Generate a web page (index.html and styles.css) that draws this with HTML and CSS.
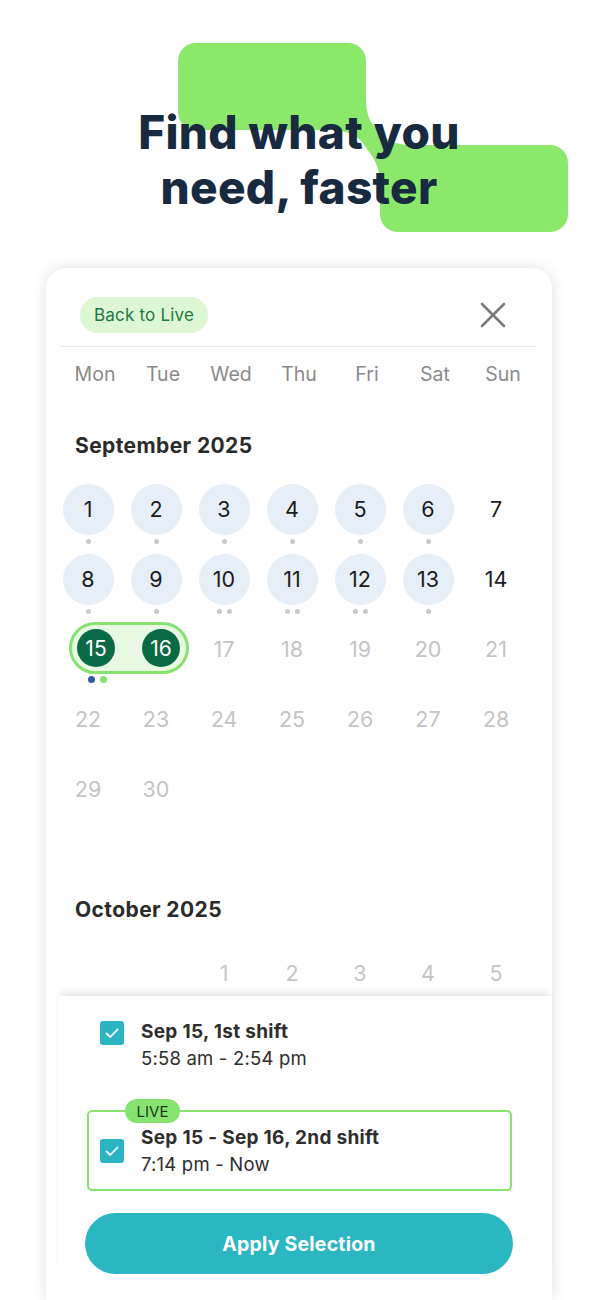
FILE: index.html
```html
<!DOCTYPE html>
<html lang="en">

<head>
    <meta charset="UTF-8">
    <meta name="viewport" content="width=device-width, initial-scale=1.0">
    <title>Find what you need, faster</title>
    <link rel="stylesheet" href="styles.css">
</head>

<body>
    <div class="hero">
        <svg class="hero-shape" width="598" height="268" viewBox="0 0 598 268">
            <rect x="178" y="43" width="188" height="87" rx="18" fill="#8ce86a"/>
            <rect x="380" y="145" width="188" height="87" rx="18" fill="#8ce86a"/>
            <path d="M330 130 Q352 130 362 142 L372 156 Q379 166 380 180 L412 145 Q393 145 386 138 L374 126 Q366 117 366 100 Z" fill="#8ce86a"/>
        </svg>
        <h1>Find what you<br>need, faster</h1>
    </div>

    <div class="card">
        <div class="card-header">
            <span class="back-live">Back to Live</span>
            <svg class="close" width="26" height="26" viewBox="0 0 26 26">
                <path d="M2 2 L24 24 M24 2 L2 24" stroke="#7b7b7b" stroke-width="2.6" stroke-linecap="round"/>
            </svg>
        </div>

        <div class="weekdays">
            <span>Mon</span><span>Tue</span><span>Wed</span><span>Thu</span><span>Fri</span><span>Sat</span><span>Sun</span>
        </div>

        <div class="calendar">
            <h2 class="month-title">September 2025</h2>
            <div class="days">
                <div class="day"><span class="num has-shift">1</span><span class="dots"><i></i></span></div>
                <div class="day"><span class="num has-shift">2</span><span class="dots"><i></i></span></div>
                <div class="day"><span class="num has-shift">3</span><span class="dots"><i></i></span></div>
                <div class="day"><span class="num has-shift">4</span><span class="dots"><i></i></span></div>
                <div class="day"><span class="num has-shift">5</span><span class="dots"><i></i></span></div>
                <div class="day"><span class="num has-shift">6</span><span class="dots"><i></i></span></div>
                <div class="day"><span class="num">7</span></div>

                <div class="day"><span class="num has-shift">8</span><span class="dots"><i></i></span></div>
                <div class="day"><span class="num has-shift">9</span><span class="dots"><i></i></span></div>
                <div class="day"><span class="num has-shift">10</span><span class="dots"><i></i><i></i></span></div>
                <div class="day"><span class="num has-shift">11</span><span class="dots"><i></i><i></i></span></div>
                <div class="day"><span class="num has-shift">12</span><span class="dots"><i></i><i></i></span></div>
                <div class="day"><span class="num has-shift">13</span><span class="dots"><i></i></span></div>
                <div class="day"><span class="num">14</span></div>

                <div class="day range-cell">
                    <div class="range">
                        <span class="sel">15</span>
                        <span class="sel">16</span>
                    </div>
                    <span class="range-dots"><i class="blue"></i><i class="green"></i></span>
                </div>
                <div class="day"><span class="num future">17</span></div>
                <div class="day"><span class="num future">18</span></div>
                <div class="day"><span class="num future">19</span></div>
                <div class="day"><span class="num future">20</span></div>
                <div class="day"><span class="num future">21</span></div>

                <div class="day"><span class="num future">22</span></div>
                <div class="day"><span class="num future">23</span></div>
                <div class="day"><span class="num future">24</span></div>
                <div class="day"><span class="num future">25</span></div>
                <div class="day"><span class="num future">26</span></div>
                <div class="day"><span class="num future">27</span></div>
                <div class="day"><span class="num future">28</span></div>

                <div class="day"><span class="num future">29</span></div>
                <div class="day"><span class="num future">30</span></div>
            </div>

            <h2 class="month-title october">October 2025</h2>
            <div class="days">
                <div class="day"></div>
                <div class="day"></div>
                <div class="day"><span class="num future">1</span></div>
                <div class="day"><span class="num future">2</span></div>
                <div class="day"><span class="num future">3</span></div>
                <div class="day"><span class="num future">4</span></div>
                <div class="day"><span class="num future">5</span></div>
            </div>
        </div>

        <div class="sheet">
            <div class="shift first">
                <span class="check">
                    <svg width="24" height="24" viewBox="0 0 24 24"><path d="M6.5 12.5 L10.3 16 L17.5 8.5" fill="none" stroke="#fff" stroke-width="1.8" stroke-linecap="round" stroke-linejoin="round"/></svg>
                </span>
                <div class="shift-text">
                    <p class="shift-title">Sep 15, 1st shift</p>
                    <p class="shift-time">5:58 am - 2:54 pm</p>
                </div>
            </div>

            <div class="shift live">
                <span class="live-badge">LIVE</span>
                <span class="check">
                    <svg width="24" height="24" viewBox="0 0 24 24"><path d="M6.5 12.5 L10.3 16 L17.5 8.5" fill="none" stroke="#fff" stroke-width="1.8" stroke-linecap="round" stroke-linejoin="round"/></svg>
                </span>
                <div class="shift-text">
                    <p class="shift-title">Sep 15 - Sep 16, 2nd shift</p>
                    <p class="shift-time">7:14 pm - Now</p>
                </div>
            </div>

            <button class="apply">Apply Selection</button>
        </div>
    </div>
</body>

</html>
```

FILE: styles.css
```css
body {
    margin: 0;
    background-color: #fff;
    font-family: Inter, "Noto Sans", sans-serif;
    color: #2a2a2a;
    overflow: hidden;
}

.hero {
    position: relative;
    height: 268px;
}

.hero-shape {
    position: absolute;
    top: 0;
    left: 0;
}

.hero h1 {
    position: relative;
    margin: 0;
    padding-top: 105px;
    font-size: 46px;
    line-height: 55px;
    font-weight: 800;
    letter-spacing: 0.3px;
    text-align: center;
    color: #172a3f;
}

.card {
    margin: 0 46px;
    height: 1032px;
    padding: 0 15px;
    background-color: #fff;
    border-radius: 20px 20px 0 0;
    box-shadow: 0 0 16px rgba(0, 0, 0, 0.12);
}

.card-header {
    display: flex;
    justify-content: space-between;
    align-items: center;
    padding: 29px 31px 13px 19px;
    border-bottom: 1px solid #e6e6e6;
}

.back-live {
    display: flex;
    align-items: center;
    justify-content: center;
    width: 128px;
    height: 36px;
    border-radius: 18px;
    background-color: #ddf7d5;
    color: #1c7843;
    font-size: 17px;
    letter-spacing: 0.2px;
}

.weekdays {
    display: grid;
    grid-template-columns: repeat(7, 68px);
    height: 54px;
    align-items: center;
    color: #8a8a8a;
    font-size: 19.5px;
}

.weekdays span {
    text-align: center;
}

.calendar {
    height: 595px;
    overflow: hidden;
    margin-left: -7px;
}

.month-title {
    margin: 33px 0 16px 21px;
    font-size: 21px;
    line-height: 24px;
    font-weight: 700;
    letter-spacing: 0.4px;
    color: #2b2b2b;
}

.month-title.october {
    margin-top: 74px;
}

.days {
    display: grid;
    grid-template-columns: repeat(7, 68px);
    grid-auto-rows: 70px;
}

.day {
    display: flex;
    flex-direction: column;
    align-items: center;
    padding-top: 9.5px;
}

.num {
    display: flex;
    align-items: center;
    justify-content: center;
    width: 51px;
    height: 51px;
    border-radius: 50%;
    font-size: 21.5px;
    color: #1b1b1b;
}

.num.has-shift {
    background-color: #e6eef8;
}

.num.future {
    color: #c4c4c4;
}

.dots {
    display: flex;
    gap: 5px;
    margin-top: 4px;
}

.dots i {
    width: 5px;
    height: 5px;
    border-radius: 50%;
    background-color: #c9c9c9;
}

.range-cell {
    grid-column: 1 / 3;
    align-items: flex-start;
    padding-top: 8px;
}

.range {
    display: flex;
    align-items: center;
    gap: 27px;
    width: 120px;
    height: 52px;
    margin-left: 15px;
    padding: 0 6px 0 5px;
    box-sizing: border-box;
    border: 3px solid #86e36f;
    border-radius: 26px;
    background-color: #e8f9e1;
}

.sel {
    display: flex;
    align-items: center;
    justify-content: center;
    width: 38px;
    height: 38px;
    border-radius: 50%;
    background-color: #0b6a46;
    color: #fff;
    font-size: 21px;
}

.range-dots {
    display: flex;
    gap: 5px;
    margin: 2px 0 0 34px;
}

.range-dots i {
    width: 7px;
    height: 7px;
    border-radius: 50%;
}

.range-dots .blue {
    background-color: #2e5c9e;
}

.range-dots .green {
    background-color: #86e36f;
}

.sheet {
    position: relative;
    margin: 0 -15px 0 -3px;
    padding-top: 8px;
    background-color: #fff;
    box-shadow: 0 -7px 8px -3px rgba(0, 0, 0, 0.11);
}

.shift {
    position: relative;
    display: flex;
    gap: 17px;
    width: 425px;
    box-sizing: border-box;
    margin-left: 29px;
    padding: 11.5px 11px;
    border: 2px solid transparent;
    border-radius: 5px;
}

.shift.first {
    align-items: flex-start;
}

.shift.first .check {
    margin-top: 3.5px;
}

.shift.live {
    align-items: center;
    margin-top: 25px;
    border-color: #86e36f;
}

.check {
    display: flex;
    width: 24px;
    height: 24px;
    flex-shrink: 0;
    border-radius: 3px;
    background-color: #2bb5c3;
}

.shift-text p {
    margin: 0;
    font-size: 18.5px;
    line-height: 27px;
    letter-spacing: 0.2px;
    color: #2e2e2e;
}

.shift-text .shift-title {
    font-size: 19px;
    font-weight: 700;
    letter-spacing: 0.3px;
}

.live-badge {
    position: absolute;
    top: -13px;
    left: 36px;
    display: flex;
    align-items: center;
    justify-content: center;
    width: 55px;
    height: 24px;
    border-radius: 12px;
    background-color: #86e36f;
    color: #1c3a1c;
    font-size: 15px;
}

.apply {
    display: block;
    width: 428px;
    height: 61px;
    margin: 22px 0 0 27px;
    border: none;
    border-radius: 31px;
    background-color: #2bb7c2;
    color: #fff;
    font-family: inherit;
    font-size: 19.5px;
    font-weight: 700;
    letter-spacing: 0.2px;
}
```
